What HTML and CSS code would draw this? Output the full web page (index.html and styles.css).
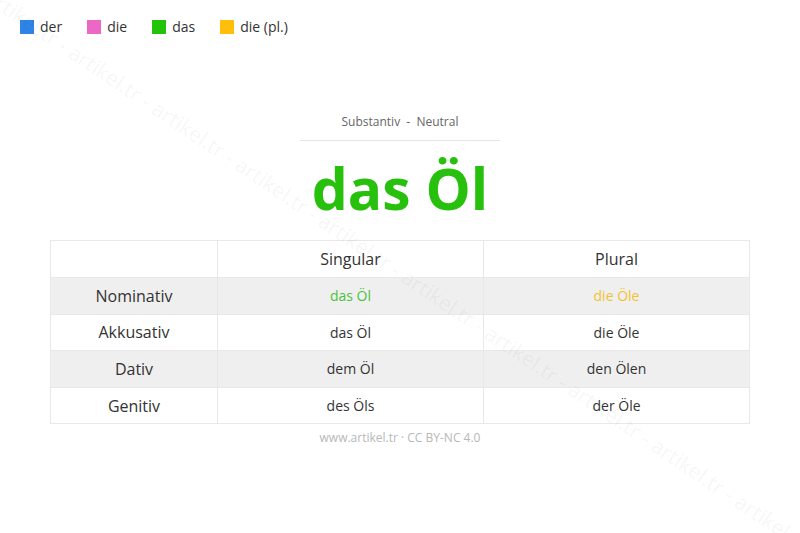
FILE: index.html
```html
<!DOCTYPE html>
<html lang="de">
<head>
<meta charset="utf-8">
<title>das Öl</title>
<link rel="stylesheet" href="styles.css">
</head>
<body>
<div class="page">
  <ul class="legend">
    <li class="legend-item"><span class="swatch swatch-der"></span>der</li>
    <li class="legend-item"><span class="swatch swatch-die"></span>die</li>
    <li class="legend-item"><span class="swatch swatch-das"></span>das</li>
    <li class="legend-item"><span class="swatch swatch-pl"></span>die (pl.)</li>
  </ul>

  <header class="word-head">
    <div class="word-type">Substantiv &nbsp;-&nbsp; Neutral</div>
    <h1 class="word">das Öl</h1>
  </header>

  <table class="decl">
    <thead>
      <tr>
        <th class="col-case"></th>
        <th class="col-num">Singular</th>
        <th class="col-num">Plural</th>
      </tr>
    </thead>
    <tbody>
      <tr class="striped">
        <th>Nominativ</th>
        <td class="c-das">das Öl</td>
        <td class="c-pl">die Öle</td>
      </tr>
      <tr>
        <th>Akkusativ</th>
        <td>das Öl</td>
        <td>die Öle</td>
      </tr>
      <tr class="striped">
        <th>Dativ</th>
        <td>dem Öl</td>
        <td>den Ölen</td>
      </tr>
      <tr>
        <th>Genitiv</th>
        <td>des Öls</td>
        <td>der Öle</td>
      </tr>
    </tbody>
  </table>

  <footer class="credit">www.artikel.tr · CC BY-NC 4.0</footer>
</div>
<div class="watermark-layer" aria-hidden="true">
  <div class="watermark">artikel.tr - artikel.tr - artikel.tr - artikel.tr - artikel.tr - artikel.tr - artikel.tr - artikel.tr - artikel.tr - artikel.tr</div>
</div>
</body>
</html>
```

FILE: styles.css
```css
html, body {
  margin: 0;
  padding: 0;
  background: #ffffff;
}

body {
  font-family: "Open Sans", "Noto Sans", sans-serif;
  color: #333333;
  width: 800px;
  height: 533px;
  overflow: hidden;
  position: relative;
}

.page {
  display: flex;
  flex-direction: column;
  align-items: center;
}

.legend {
  align-self: flex-start;
  display: flex;
  gap: 25px;
  list-style: none;
  margin: 0;
  padding: 17px 0 0 20px;
  font-size: 14px;
  line-height: 20px;
  color: #333;
}

.legend-item {
  display: flex;
  align-items: center;
  gap: 6px;
}

.swatch {
  width: 14px;
  height: 14px;
  display: inline-block;
}

.swatch-der { background: #2f84e8; }
.swatch-die { background: #ec68c4; }
.swatch-das { background: #22c40a; }
.swatch-pl { background: #ffbe0a; }

.word-head {
  margin-top: 76px;
  display: flex;
  flex-direction: column;
  align-items: center;
}

.word-type {
  width: 200px;
  text-align: center;
  font-size: 12px;
  line-height: 18px;
  color: #666;
  padding-bottom: 9px;
  border-bottom: 1px solid #e6e6e6;
}

.word {
  margin: 0;
  font-size: 57px;
  line-height: 94px;
  font-weight: 700;
  color: #27c10d;
}

.decl {
  margin-top: 5px;
  width: 700px;
  border-collapse: collapse;
  table-layout: fixed;
}

.decl th,
.decl td {
  border: 1px solid #e8e8e8;
  text-align: center;
  padding: 0;
  height: 35.6px;
}

.decl thead th {
  font-size: 16px;
  font-weight: 400;
  color: #333;
  height: 36px;
}

.col-case { width: 166px; }
.col-num { width: auto; }

.decl tbody th {
  font-size: 16px;
  font-weight: 400;
  color: #333;
}

.decl tbody td {
  font-size: 14px;
  color: #333;
}

.striped th,
.striped td {
  background: #efefef;
}

.decl td.c-das { color: #4cc23a; }
.decl td.c-pl { color: #f2c232; }

.credit {
  margin-top: 5px;
  font-size: 12px;
  color: #b8b8b8;
}

.watermark-layer {
  position: absolute;
  inset: 0;
  overflow: hidden;
  pointer-events: none;
}

.watermark {
  position: absolute;
  left: -4px;
  top: -18px;
  white-space: nowrap;
  font-size: 21px;
  color: rgba(0, 0, 0, 0.055);
  transform-origin: 0 0;
  transform: rotate(34deg);
}
```
